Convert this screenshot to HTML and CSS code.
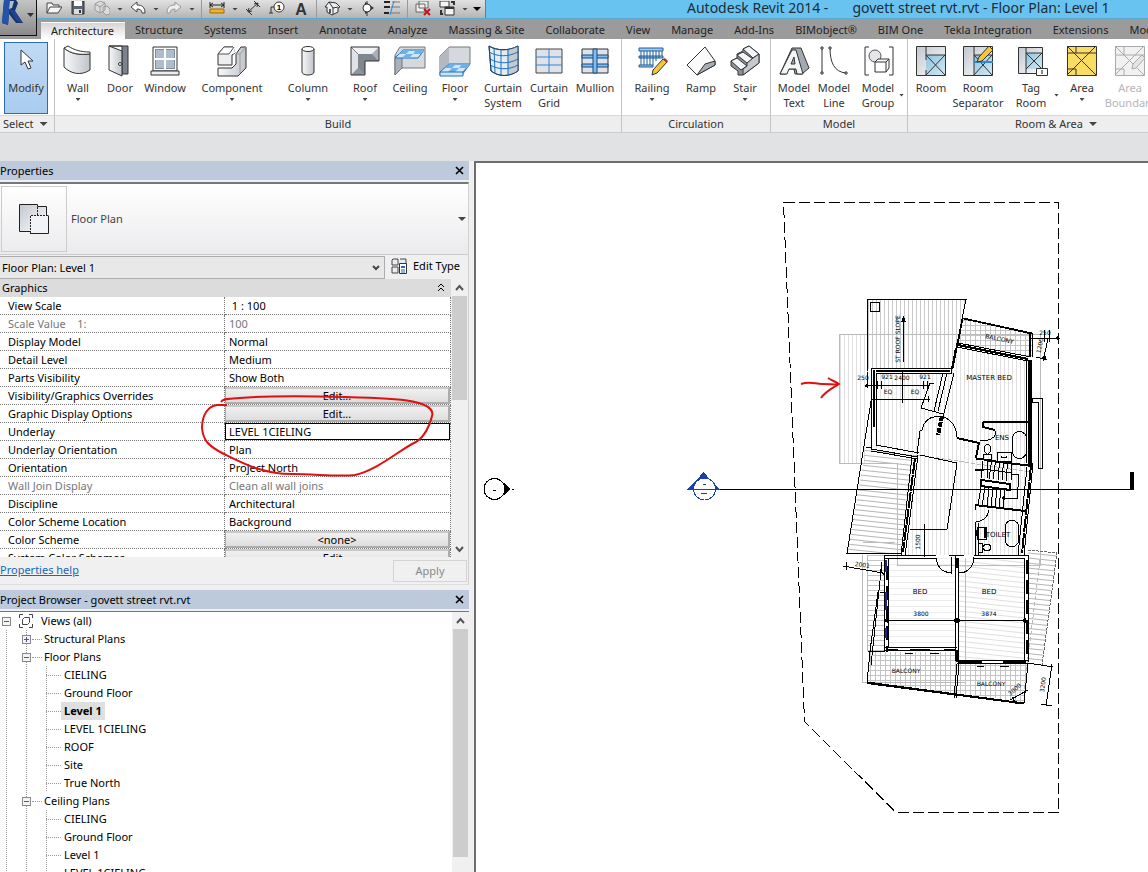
FILE: index.html
```html
<!DOCTYPE html>
<html lang="en">
	<head>
		<meta charset="UTF-8">
		<meta name="viewport" content="width=device-width, initial-scale=1.0">
		<title>Autodesk Revit 2014 - govett street rvt.rvt - Floor Plan: Level 1</title>
		<link rel="stylesheet" href="styles.css">
	</head>
	<body>
		<header class="titlebar">
			<button class="appmenu" aria-label="Application menu">
				<svg width="36" height="35" viewBox="0 0 36 35">
					<defs>
						<linearGradient id="metal" x1="0" y1="0" x2="1" y2="1"><stop offset="0" stop-color="#c3c8cf"/><stop offset="1" stop-color="#fbfcfd"/></linearGradient>
						<linearGradient id="shade" x1="0" y1="0" x2="1" y2="0"><stop offset="0" stop-color="#f8f9fa"/><stop offset="1" stop-color="#bfc4ca"/></linearGradient>
						<linearGradient id="glass" x1="0" y1="0" x2="1" y2="1"><stop offset="0" stop-color="#8fc4e0"/><stop offset="1" stop-color="#d3e8f2"/></linearGradient>
					</defs>
					<path d="M4 0L16 0L18 3L15 11L23 23L16 23L9 14L8 25L2 23Z" fill="#16356f"/>
					<path d="M4 0L10 0L9 14L8 25L2 23Z" fill="#2453a6"/>
					<path d="M10 1L14 1L12 8L9 9Z" fill="#b5bccb"/>
					<path d="M9 9L15 11L23 23L17 21Z" fill="#1f4590"/>
					<path d="M27 13h7l-3.500 4z" fill="#333"/>
				</svg>
			</button>
			<nav class="quick" aria-label="Quick access">
				<button aria-label="Open"><svg viewBox="0 0 16 16"><path d="M1 12V2h5l1 2h6v2M1 12l3-6h12l-4 6z" fill="#f5f5f5" stroke="#444"/></svg></button>
				<button aria-label="Save"><svg viewBox="0 0 16 16"><path d="M2 0h12v13H2z" fill="#5b6470" stroke="#333"/><path d="M4 0h8v5H4z" fill="#fff"/><path d="M4 8h8v5H4z" fill="#ddd"/><path d="M9 9h2v3H9z" fill="#333"/></svg></button>
				<button aria-label="Synchronize"><svg viewBox="0 0 16 16"><path d="M1 3l5-3 5 2v7l-5 3-5-3zM1 3l5 3 5-4M6 6v6M9 6l4-1 3 3v5l-4 1-3-3z" fill="#ddd" stroke="#999"/></svg></button>
				<i class="caret"></i>
				<button aria-label="Undo"><svg viewBox="0 0 16 16"><path d="M1 6l6-5v3c5 0 8 2 8 8h-3c0-3-2-4-5-4v3z" fill="#fff" stroke="#444"/></svg></button>
				<i class="caret"></i>
				<button aria-label="Redo"><svg viewBox="0 0 16 16"><path d="M15 6L9 1v3c-5 0-8 2-8 8h3c0-3 2-4 5-4v3z" fill="#eee" stroke="#999"/></svg></button>
				<i class="caret"></i>
				<i class="split"></i>
				<button aria-label="Measure"><svg viewBox="0 0 16 16"><path d="M1 4h14M1 1v6M15 1v6M4 2L1 4l3 2M12 2l3 2-3 2" fill="none" stroke="#222"/><path d="M1 8h14v4H1z" fill="#f0b429" stroke="#a36b00"/></svg></button>
				<i class="caret"></i>
				<button aria-label="Aligned dimension"><svg viewBox="0 0 16 16"><path d="M3 11L13 2M1 8l6 6M9 0l6 6M3 11l1-4M3 11l4-1M13 2l-4 1M13 2l-1 4" fill="none" stroke="#333"/></svg></button>
				<button aria-label="Tag by category"><svg viewBox="0 0 16 16"><circle cx="10" cy="6" r="5" fill="#fff" stroke="#333"/><path d="M5 6H2v6M0 12h4" fill="none" stroke="#333"/><text x="10" y="9" class="tagnum">1</text></svg></button>
				<button aria-label="Text"><svg viewBox="0 0 16 16"><text x="8" y="14" class="bigA">A</text></svg></button>
				<i class="split"></i>
				<button aria-label="Default 3D view"><svg viewBox="0 0 16 16"><path d="M1 6l4-5 7 1 4 4-2 1v4l-6 3-5-3V6z" fill="#eef1f4" stroke="#333"/><path d="M5 1l4 6v6M9 7l5-1" fill="none" stroke="#333"/><path d="M5 8h2v4H5z" fill="#555"/></svg></button>
				<i class="caret"></i>
				<button aria-label="Section"><svg viewBox="0 0 16 16"><path d="M5 1l9 6-9 6z" fill="#333"/><circle cx="7" cy="7" r="4" fill="#fff" stroke="#333"/><path d="M7 0v3M7 11v4" stroke="#333"/></svg></button>
				<button aria-label="Thin lines"><svg viewBox="0 0 16 16"><path d="M0 1h6M0 6h6M0 12h5" stroke="#222" stroke-width="2"/><path d="M8 1h8M7 6h9M6 12h10" stroke="#777"/><path d="M10 0L6 14" stroke="#2c8ad8"/></svg></button>
				<i class="split"></i>
				<button aria-label="Close hidden windows"><svg viewBox="0 0 16 16"><path d="M4 0h9v7H4zM1 3h9v8H1z" fill="#eee" stroke="#666"/><path d="M9 8l6 6M15 8l-6 6" stroke="#c4141c" stroke-width="2"/></svg></button>
				<button aria-label="Switch windows"><svg viewBox="0 0 16 16"><path d="M1 0h9v6H1zM6 6h9v8H6z" fill="#f4f4f4" stroke="#333"/><path d="M6 7h9M12 1h3v3M4 13H2v-4" fill="none" stroke="#333" stroke-width="2"/></svg></button>
				<i class="caret"></i>
				<i class="caret caret-big"></i>
			</nav>
			<h1 class="title"><span>Autodesk Revit 2014 -</span><span>govett street rvt.rvt - Floor Plan: Level 1</span></h1>
		</header>

		<nav class="tabs">
			<a href="#" class="active">Architecture</a>
			<a href="#">Structure</a>
			<a href="#">Systems</a>
			<a href="#">Insert</a>
			<a href="#">Annotate</a>
			<a href="#">Analyze</a>
			<a href="#">Massing &amp; Site</a>
			<a href="#">Collaborate</a>
			<a href="#">View</a>
			<a href="#">Manage</a>
			<a href="#">Add-Ins</a>
			<a href="#">BIMobject®</a>
			<a href="#">BIM One</a>
			<a href="#">Tekla Integration</a>
			<a href="#">Extensions</a>
			<a href="#">Modify</a>
		</nav>

		<div class="ribbon">
			<section class="group select">
				<div class="tools">
					<button class="tool w44 selected">
						<svg viewBox="0 0 32 32"><path d="M11 5v15l4-3 3 7 3-1-3-7h5z" fill="#fff" stroke="#333"/></svg>
						<span>Modify</span>
					</button>
				</div>
				<h2>Select <i class="caret caret-big"></i></h2>
			</section>

			<section class="group">
				<div class="tools">
					<button class="tool w40">
						<svg viewBox="0 0 32 32"><path d="M2 3c7 6 15 7 26 6v16c-9 6-19 4-26-3z" fill="url(#shade)" stroke="#333"/><path d="M2 3l4-2c6 4 13 6 22 6v2C17 10 9 9 2 3z" fill="#fff" stroke="#333"/></svg>
						<span>Wall</span><i class="caret"></i>
					</button>
					<button class="tool w44">
						<svg viewBox="0 0 32 32"><path d="M5 1h19v28h-6V1z" fill="#7b838e" stroke="#333"/><path d="M5 1l13 5v25L5 25z" fill="url(#shade)" stroke="#333"/><circle cx="16" cy="19" r="1.500" fill="#fff" stroke="#333"/></svg>
						<span>Door</span>
					</button>
					<button class="tool w46">
						<svg viewBox="0 0 32 32"><path d="M4 2h24v24H4z" fill="#fff" stroke="#333"/><path d="M6 4h20v20H6z" fill="#7f8da0"/><path d="M7 5h8v8H7zM17 5h8v8h-8zM7 15h8v8H7zM17 15h8v8h-8z" fill="#aebccd"/><path d="M15 4h2v20h-2zM6 13h20v2H6z" fill="#fff"/><path d="M2 26h28v4H2z" fill="#eee" stroke="#333"/></svg>
						<span>Window</span>
					</button>
					<button class="tool w88">
						<svg viewBox="0 0 32 32"><path d="M2 9l6-7h9l2 6-3 2v10H2z" fill="#eceef0" stroke="#333"/><path d="M2 9h14l3-1-1-6H8z" fill="#fff"/><path d="M2 9l6-7h9M2 9h11l5-7" fill="none" stroke="#555"/><path d="M20 9l5-7h5v21l-8 8H2v-8h14l4-4z" fill="url(#shade)" stroke="#333"/><path d="M20 9h4l6-7M24 9v19" fill="none" stroke="#999"/></svg>
						<span>Component</span><i class="caret"></i>
					</button>
					<button class="tool w64">
						<svg viewBox="0 0 32 32"><path d="M10 4v23c0 4 12 4 12 0V4z" fill="url(#shade)" stroke="#333"/><ellipse cx="16" cy="4" rx="6" ry="2.500" fill="#fff" stroke="#333"/></svg>
						<span>Column</span><i class="caret"></i>
					</button>
					<button class="tool w50">
						<svg viewBox="0 0 32 32"><path d="M2 2h28v14H16v14H2z" fill="#c9cdd3"/><path d="M2 2l7 7h14l7-7z" fill="#f2f3f5"/><path d="M2 2l7 7v14l-7 7z" fill="#dfe2e6"/><path d="M9 23l7 7H2z" fill="#8d949e"/><path d="M23 9l7 7V2z" fill="#a9afb8"/><path d="M9 9h14l7 7H16v14l-7-7z" fill="#7f8791"/><path d="M2 2l7 7" stroke="#888"/><path d="M2 2h28v14H16v14H2z" fill="none" stroke="#333"/></svg>
						<span>Roof</span><i class="caret"></i>
					</button>
					<button class="tool w40">
						<svg viewBox="0 0 32 32"><path d="M1 10l5-8h25v21H8l-7 7z" fill="#d5d8dc" stroke="#777"/><path d="M8 8v15l-7 7V12z" fill="#aab0b7" stroke="#777"/><path d="M1 13l8-8h21l-6 8z" fill="#cfe6f8" stroke="#1a70bd"/><path d="M9 5h7l-4 4H5zM22 5h8l-3 4h-8zM12 9h7l-4 4H8z" fill="#6fb1e4"/></svg>
						<span>Ceiling</span>
					</button>
					<button class="tool w50">
						<svg viewBox="0 0 32 32"><path d="M1 11l9-9h21v17l-8 11H1z" fill="#d5d8dc" stroke="#777"/><path d="M1 11l9-9v17l-9 8z" fill="#b4b9c0"/><path d="M1 27l9-8h21l-7 8v4H1z" fill="#cfe6f8" stroke="#1a70bd"/><path d="M10 19h7l-4 4H6zM23 19h8l-3 4h-8zM13 23h7l-4 4H9z" fill="#6fb1e4"/><path d="M1 27h23" stroke="#1a70bd"/></svg>
						<span>Floor</span><i class="caret"></i>
					</button>
					<button class="tool w46">
						<svg viewBox="0 0 32 32"><path d="M2 1c8 5 20 5 29 0v25c-9 6-19 6-27 0z" fill="#e3edf6" stroke="#333"/><path d="M20 5L31 1v25l-10 4z" fill="#c3cad2"/><path d="M7 3l1 25M14 5v25M21 5v25M2 7c9 5 19 5 29 0M3 14c9 5 19 5 28 0M3 20c9 5 19 5 28 0" fill="none" stroke="#1a70bd"/><path d="M2 1c8 5 20 5 29 0v25c-9 6-19 6-27 0z" fill="none" stroke="#174a82"/></svg>
						<span>Curtain System</span>
					</button>
					<button class="tool w46">
						<svg viewBox="0 0 32 32"><path d="M3 4h26v24H3z" fill="#dfe2e6" stroke="#444"/><path d="M16 4v24M3 12h26M3 20h26" stroke="#2c8ad8"/></svg>
						<span>Curtain Grid</span>
					</button>
					<button class="tool w46">
						<svg viewBox="0 0 32 32"><path d="M3 4h26v24H3z" fill="#dfe2e6" stroke="#333"/><path d="M3 10h26v3H3zM3 19h26v3H3z" fill="#7fbdf0" stroke="#174a82"/><path d="M14 4h4v24h-4z" fill="#7fbdf0" stroke="#174a82"/></svg>
						<span>Mullion</span>
					</button>
				</div>
				<h2>Build</h2>
			</section>

			<section class="group">
				<div class="tools">
					<button class="tool w54">
						<svg viewBox="0 0 32 32"><path d="M3 3h24v3H3zM3 11h24v2H3zM3 20h14v2H3z" fill="#9cc9ef" stroke="#1d5c9c"/><path d="M5 6v14M8 6v14M11 6v14M14 6v14M17 6v14M20 6v10M23 6v7M26 6v5" stroke="#1d5c9c"/><path d="M16 30l1-5L27 14l4 3-10 11z" fill="#f5c53c" stroke="#333"/><path d="M27 14l2-1 3 3-1 2z" fill="#a63d2f"/></svg>
						<span>Railing</span><i class="caret"></i>
					</button>
					<button class="tool w44">
						<svg viewBox="0 0 32 32"><path d="M2 20L20 2l10 14v4L12 30z" fill="#fafafa" stroke="#333"/><path d="M12 30l8-11 10-3v4z" fill="#a9aeb5" stroke="#333"/></svg>
						<span>Ramp</span>
					</button>
					<button class="tool w44">
						<svg viewBox="0 0 32 32"><path d="M2 16l6-3V9l6-3V4l6-3 10 8v9L14 30H9V26L2 21z" fill="#8d949c" stroke="#333"/><path d="M14 4l6-3 10 8-6 4zM8 10l6-3 10 7-6 4zM2 16l6-3 10 8-6 4z" fill="#f4f5f6" stroke="#333"/><path d="M30 9v9L14 30v-6l4-3v-3l6-5z" fill="#c5c9ce" stroke="#333"/></svg>
						<span>Stair</span><i class="caret"></i>
					</button>
				</div>
				<h2>Circulation</h2>
			</section>

			<section class="group">
				<div class="tools">
					<button class="tool w40">
						<svg viewBox="0 0 32 32"><path d="M2 29L14 3h9l8 20-7 6h-7l-1-5h-6l-2 5z" fill="#a3a9b1" stroke="#333"/><path d="M2 29L14 5h4l7 24h-6l-1-5h-7l-2 5zM13 19h4l-1-7z" fill="#f4f5f6" fill-rule="evenodd" stroke="#333"/></svg>
						<span>Model Text</span>
					</button>
					<button class="tool w40">
						<svg viewBox="0 0 32 32"><path d="M4 3v25M12 3c0 14 4 24 16 25" fill="none" stroke="#333"/><path d="M3 2h2v2H3zM3 27h2v2H3zM11 2h2v2h-2zM27 27h2v2h-2z" fill="#fff" stroke="#333"/></svg>
						<span>Model Line</span>
					</button>
					<button class="tool w50">
						<svg viewBox="0 0 32 32"><path d="M6 2H2v28h4M26 2h4v28h-4" fill="none" stroke="#333"/><circle cx="12" cy="11" r="6" fill="#e3e5e8" stroke="#555"/><path d="M12 17l3-3h11v9l-3 4H12z" fill="#fff" stroke="#333"/><path d="M12 17h11v10M23 17l3-3" fill="none" stroke="#333"/></svg>
						<span class="side">Model Group<i class="caret"></i></span>
					</button>
				</div>
				<h2>Model</h2>
			</section>

			<section class="group">
				<div class="tools">
					<button class="tool w40">
						<svg viewBox="0 0 32 32"><path d="M1.500 1.500h29v29h-29z" fill="url(#metal)" stroke="#333"/><path d="M11 10h19v20H11z" fill="url(#glass)"/><path d="M11 1v14M11 25v5M11 10h19M11 10l19 20M30 10L11 30" fill="none" stroke="#333"/></svg>
						<span>Room</span>
					</button>
					<button class="tool w54">
						<svg viewBox="0 0 32 32"><path d="M1.500 1.500h29v29h-29z" fill="url(#metal)" stroke="#333"/><path d="M12 10h18v20H12z" fill="url(#glass)"/><path d="M12 1v29M12 10h18M12 10l18 20M30 10L12 30" fill="none" stroke="#333"/><path d="M12 17h19" stroke="#2c8ad8" stroke-width="2"/><path d="M15 17l2-5L27 1l4 4-11 11z" fill="#f5c53c" stroke="#333"/></svg>
						<span>Room Separator</span>
					</button>
					<button class="tool w54">
						<svg viewBox="0 0 32 32"><path d="M2.500 2.500h24v26h-24z" fill="url(#metal)" stroke="#333"/><path d="M10 8h16v16H10z" fill="url(#glass)"/><path d="M10 2v26M10 8h16M10 8l16 16M26 8L10 24" fill="none" stroke="#333"/><path d="M20.500 23.500h11v7h-11z" fill="#fff" stroke="#333"/><path d="M26 25v4" stroke="#111"/></svg>
						<span class="side">Tag Room<i class="caret"></i></span>
					</button>
					<button class="tool w46">
						<svg viewBox="0 0 32 32"><path d="M1.500 1.500h29v29h-29z" fill="#fbdc62" stroke="#333"/><path d="M1 8h29M10 1v7M10 24v6M1 1l29 29M30 1L1 30M1 24h9" fill="none" stroke="#333"/></svg>
						<span>Area</span><i class="caret"></i>
					</button>
					<button class="tool w50" disabled>
						<svg viewBox="0 0 32 32"><path d="M1.500 1.500h29v29h-29z" fill="#f1f1f1" stroke="#aaa"/><path d="M1 10h29M10 1v9M10 24v6M1 1l29 29M30 1L1 30M1 24h9" fill="none" stroke="#aaa"/><path d="M18 24l1-5 9-9 3 3-9 10z" fill="#e5e5e5" stroke="#aaa"/></svg>
						<span>Area Boundary</span>
					</button>
				</div>
				<h2 class="roomarea">Room &amp; Area <i class="caret caret-big"></i></h2>
			</section>
		</div>
		<div class="optionsbar"></div>

		<main class="workspace">
			<aside class="dock">
				<section class="palette">
					<header class="caption"><h2>Properties</h2><button aria-label="Close"><svg width="9" height="9" viewBox="0 0 9 9"><path d="M1 1l7 7M8 1l-7 7" stroke="#000" stroke-width="1.600"/></svg></button></header>
					<div class="props">
						<button class="type">
							<span class="thumb">
								<svg width="32" height="32" viewBox="0 0 32 32"><path d="M1.500 1.500h18v2h9v9h-9v16h-18z" fill="url(#metal)"/><path d="M12.500 12.500h18v18h-18z" fill="#f1f4f6"/><path d="M12 28.500H1.500v-27h18v2h9v9M12 30.500h18.500v-18" fill="none" stroke="#222"/><path d="M19.500 4v8.500M30 12.500H12.500V30" fill="none" stroke="#222" stroke-dasharray="2 1"/></svg>
							</span>
							<span class="typename">Floor Plan</span>
							<i class="caret caret-big"></i>
						</button>
						<div class="instance">
							<select aria-label="Instance"><option>Floor Plan: Level 1</option></select>
							<button class="edittype">
								<svg width="16" height="16" viewBox="0 0 16 16"><path d="M1 2l1-1h5v6H1zM9 1h6v6H9M1 9h6v6H1z" fill="#e9edf1" stroke="#444"/><path d="M8.500 5.500h7v10h-7z" fill="#fff" stroke="#333"/><path d="M10 8h4v2h-4z" fill="#2467b3"/><path d="M10 12h4M10 14h4" stroke="#2467b3"/></svg>
								Edit Type
							</button>
						</div>
						<div class="listing">
							<div class="listview">
								<table>
									<colgroup><col class="names"><col></colgroup>
									<thead><tr><th colspan="2">Graphics<svg width="8" height="9" viewBox="0 0 8 9"><path d="M1 4l3-3 3 3M1 8l3-3 3 3" fill="none" stroke="#000"/></svg></th></tr></thead>
									<tbody>
										<tr><td>View Scale</td><td>&nbsp;1 : 100</td></tr>
										<tr class="dim"><td>Scale Value &nbsp;&nbsp; 1:</td><td>100</td></tr>
										<tr><td>Display Model</td><td>Normal</td></tr>
										<tr><td>Detail Level</td><td>Medium</td></tr>
										<tr><td>Parts Visibility</td><td>Show Both</td></tr>
										<tr><td>Visibility/Graphics Overrides</td><td class="cell"><button>Edit...</button></td></tr>
										<tr><td>Graphic Display Options</td><td class="cell"><button>Edit...</button></td></tr>
										<tr><td><label for="underlay">Underlay</label></td><td class="cell"><input id="underlay" value="LEVEL 1CIELING"></td></tr>
										<tr><td>Underlay Orientation</td><td>Plan</td></tr>
										<tr><td>Orientation</td><td>Project North</td></tr>
										<tr class="dim"><td>Wall Join Display</td><td>Clean all wall joins</td></tr>
										<tr><td>Discipline</td><td>Architectural</td></tr>
										<tr><td>Color Scheme Location</td><td>Background</td></tr>
										<tr><td>Color Scheme</td><td class="cell"><button>&lt;none&gt;</button></td></tr>
										<tr><td>System Color Schemes</td><td class="cell"><button>Edit...</button></td></tr>
									</tbody>
								</table>
							</div>
							<div class="scrollbar">
								<svg width="15" height="17" viewBox="0 0 15 17"><path d="M4 11l3.500-4 3.500 4" fill="none" stroke="#555" stroke-width="2"/></svg>
								<i class="handle"></i>
								<svg width="15" height="17" viewBox="0 0 15 17"><path d="M4 7l3.500 4L11 7" fill="none" stroke="#555" stroke-width="2"/></svg>
							</div>
						</div>
						<footer class="applybar"><a href="#">Properties help</a><button disabled>Apply</button></footer>
					</div>
					<svg class="markup" width="240" height="92" viewBox="198 390 240 92"><path d="M221 402C223 398 230 399 240 398C275 395 310 396 345 397C375 398 400 398 415 402C428 405 434 410 432 416C430 426 424 437 416 442C402 448 378 470 355 475C340 477 315 474 292 474C262 474 240 462 224 454C208 446 203 440 202 428C202 415 208 406 217 405L227 405" fill="none" stroke="#e01010" stroke-width="2"/></svg>
				</section>

				<section class="palette browser">
					<header class="caption"><h2>Project Browser - govett street rvt.rvt</h2><button aria-label="Close"><svg width="9" height="9" viewBox="0 0 9 9"><path d="M1 1l7 7M8 1l-7 7" stroke="#000" stroke-width="1.600"/></svg></button></header>
					<div class="treebox">
						<div class="tree">
							<div class="node root"><button class="fold" aria-label="Collapse"></button>
								<svg width="14" height="14" viewBox="0 0 14 14"><path d="M4 .5H.5V4M10 .5h3.500V4M4 13.500H.5V10M10 13.500h3.500V10" fill="none" stroke="#444"/><path d="M3.500 5.500l2-2h5v5l-2 2h-5z" fill="#fff" stroke="#444"/></svg>
								Views (all)</div>
							<ul class="branches">
								<li><div class="node"><button class="fold plus" aria-label="Expand"></button>Structural Plans</div></li>
								<li><div class="node"><button class="fold" aria-label="Collapse"></button>Floor Plans</div>
									<ul class="leaves">
										<li>CIELING</li>
										<li>Ground Floor</li>
										<li><b>Level 1</b></li>
										<li>LEVEL 1CIELING</li>
										<li>ROOF</li>
										<li>Site</li>
										<li>True North</li>
									</ul>
								</li>
								<li><div class="node"><button class="fold" aria-label="Collapse"></button>Ceiling Plans</div>
									<ul class="leaves">
										<li>CIELING</li>
										<li>Ground Floor</li>
										<li>Level 1</li>
										<li>LEVEL 1CIELING</li>
										<li>ROOF</li>
									</ul>
								</li>
							</ul>
						</div>
						<div class="scrollbar">
							<svg width="15" height="17" viewBox="0 0 15 17"><path d="M4 11l3.500-4 3.500 4" fill="none" stroke="#555" stroke-width="2"/></svg>
							<i class="handle"></i>
						</div>
					</div>
				</section>
			</aside>

			<div class="canvas">
				<svg class="plan" width="672" height="709" viewBox="476 163 672 709">
					<defs>
						<pattern id="vert" width="4" height="8" patternUnits="userSpaceOnUse"><path d="M.5 0v8" stroke="#c9c9c9"/></pattern>
						<pattern id="vertlight" width="4" height="8" patternUnits="userSpaceOnUse"><path d="M.5 0v8" stroke="#e0e0e0"/></pattern>
						<pattern id="tile" width="5" height="5" patternUnits="userSpaceOnUse"><path d="M.5 0v5M0 .5h5" stroke="#c4c4c4"/></pattern>
						<pattern id="boards" width="8" height="5" patternUnits="userSpaceOnUse"><path d="M0 .5h8" stroke="#c4c4c4"/></pattern>
						<pattern id="boardslant" width="8" height="5" patternUnits="userSpaceOnUse" patternTransform="rotate(6)"><path d="M0 2.500h8" stroke="#b4b4b4" class="soft"/></pattern>
						<pattern id="bedlines" width="8" height="5" patternUnits="userSpaceOnUse" patternTransform="rotate(6)"><path d="M0 2.500h8" stroke="#e0e0e0" class="soft"/></pattern>
						<pattern id="bedflat" width="8" height="6" patternUnits="userSpaceOnUse"><path d="M0 .5h8" stroke="#ececec"/></pattern>
					</defs>

					<!-- site boundary -->
					<path d="M783.500 202.500H1058.500V812.500H896L804.500 721.500Z" class="site"/>

					<!-- hatches -->
					<path d="M867 299H966L952 369H867Z" fill="url(#vert)"/>
					<path d="M963 318L1032 333V357L958 343Z" fill="url(#tile)"/>
					<path d="M839 335H867V463H839ZM876 373H950L958 346L1028 360V463L1022 555H905L918 455L876 448Z" fill="url(#vertlight)"/>
					<path d="M866 447L918 455L903 553H847Z" fill="url(#boardslant)"/>
					<path d="M867 555H885V651H867Z" fill="url(#boards)"/>
					<path d="M1028 550L1057 553L1042 665L1028 663Z" fill="url(#boardslant)"/>
					<path d="M888 558H955V648H888Z" fill="url(#bedflat)"/>
					<path d="M958 558H1024V660H958Z" fill="url(#bedlines)"/>
					<path d="M870 652H956V663H1028L1024 702L867 682Z" fill="url(#tile)"/>

					<!-- underlay outlines -->
					<g class="under">
						<path d="M897 463.500H839.500V334.500H1041M1040.500 334V565.500H897.500V463"/>
						<path d="M862.500 555V682.500H965M862.500 542.500H895M965.500 558V660M867.500 555V651"/>
						<path d="M918 455L1030 472M1040 560L1024 690" stroke-dasharray="4 2"/>
					</g>

					<!-- section line and heads -->
					<path d="M717 489.500H1130" class="line"/>
					<path d="M1129.500 472h4v18h-4z"/>
					<circle cx="494.500" cy="489" r="10.500" class="line"/>
					<path d="M504 483L510 489L504 495ZM493 489.500h3v1h-3zM512 489h2v1h-2z"/>
					<g class="elev">
						<path d="M688 489.500L703.500 473L719 489.500Z"/>
						<circle cx="704.500" cy="489" r="11"/>
						<path d="M690 489.500H718M703 484.500h3M701 493.500h6"/>
					</g>

					<!-- upper roof and balcony -->
					<g class="line">
						<path d="M867.500 371V299.500H966L952 369M870.500 302.500H879.500V311.500H870.500Z"/>
						<path d="M903.500 362V318M867 372V385.500H929M872 399.500H930M902.500 372V403M877 381v8M881 381v8M923 381v8M927 381v8M874 396v6M928 396v6"/>
						<path d="M943 373L934 411M947 373L938 411M930 383L921 408L943 414M954 373L943 417M930 383H934"/>
						<path d="M1030 338.500H1060M1048 339L1043 361M1036 357L1047 360M1044 330V342M1049 330V342M1032.500 398.500H1042.500V468H1038.500V402.500H1032.500Z"/>
						<path d="M872 395L847 553.500H902M871 448L866 447"/>
					</g>
					<path d="M901 322L903.500 316L906 322ZM864 386l4-4v6zM1055 338l4-3v6zM1041 358l4-3 2 5z"/>
					<g class="wall">
						<path d="M963 318L1032 333V357M964 319L1032 334"/>
						<path d="M871.500 450V368.500H953L963 318M876.500 446V373.500H951L955 350"/>
						<path d="M958 343L1031 357M957 347L1028 361M1026.500 361V463"/>
						<path d="M871 449L918 457M871 451L918 459M876 445L919 453"/>
					</g>
					<g class="heavy">
						<path d="M874 370V427M1030 333V357M960 332L952 368M876 371H950M958 345L1028 359M983 422H1029V428"/>
						<path d="M983 422V427L995 430M957 438L979 443L976 458M976 459H984" />
					</g>
					<path d="M1029.500 360V466" class="thick"/>
					<path d="M942 416L938 435" class="thick" stroke-dasharray="5 1"/>

					<!-- hall, ensuite, stair, toilet -->
					<g class="line">
						<path d="M917 454L920 431L922 430C925 414 945 412 953 424C956 429 957 434 957 437"/>
						<path d="M920 455L957 463L947 529.500H910M924.500 524V557M921 529h7M921 555h7"/>
						<path d="M996 431C996 436 992 441 980 441"/>
						<path d="M997 452H1011V461H997ZM1001 456a3 2 0 0 0 6 0M983 454H991V459H983Z"/>
						<ellipse cx="987.500" cy="449" rx="3" ry="5"/>
						<rect x="1012.500" y="431.500" width="14" height="27" rx="7"/>
						<path d="M983 461L981 478M987.500 461V478M991.500 462L989 479M995.500 462L993 479M999.500 463L998 480M1003.500 463L1002 480M1007.500 463L1006 481M1011.500 464V480M983 469L1012 473"/>
						<path d="M981 487L978 505M985 487L982 506M989 488L987 506M993 488L991 506M997 489L995 507M1001 489L999 508M1005 490L1003 509"/>
						<path d="M1012 474L1019 475L1017 499L1002 498M1005 496L1002 498L1005 500"/>
						<path d="M975.500 505V510M975.500 522V555M978.500 523V555M989 510C988 517 984 521 976 522"/>
						<path d="M977 527H986V539H977Z"/>
						<ellipse cx="987" cy="547.500" rx="4" ry="3"/>
						<path d="M978 543h4v9h-4z"/>
						<rect x="1005.500" y="520.500" width="13" height="26" rx="6"/>
					</g>
					<g class="wall">
						<path d="M1033 463L1024 555M1027 467L1018 555M918 455L905 556M912 456L901 555"/>
					</g>
					<g class="heavy">
						<path d="M984 460L1032 466M975 470h9M975 505L1025 511"/>
						<path d="M981 480L1010 484V490L981 486Z" fill="#fff"/>
						<path d="M915 458L903 552M1031 465L1022 553" stroke-dasharray="16 1"/>
						<path d="M977 530v6M985 528v10"/>
					</g>

					<!-- bedrooms and lower balconies -->
					<g class="wall">
						<path d="M885 555.500H936M949 555.500H964M974 555.500H1028M885 558.500H936M974 558.500H1024"/>
						<path d="M884.500 555V651M888.500 558V647M955.500 555V661M958.500 558V660M1024.500 558V662M1028 555V662"/>
						<path d="M885 647.500H957M885 650.500H956M957 660.500H1028M957 663H1029"/>
						<path d="M870 652L867 682L1024 703L1028 663M957 664L954 698M959 664L956 698"/>
					</g>
					<g class="heavy">
						<path d="M886.500 566V652M1026.500 560V660M956.500 558V568" stroke-dasharray="14 6"/>
						<path d="M886 649.500H898M910 649.500H930M944 649.500H956M958 662H982M1003 662H1026M867 683L1024 703.500M957 650V662"/>
					</g>
					<path d="M885.500 560v12M885.500 592v18M885.500 628v10" stroke="#22228c" stroke-width="2"/>
					<g class="line">
						<path d="M886 620.500H1026M936.500 558C937 567 942 572 951 573V557M974 557C974 566 968 573 959 573"/>
						<path d="M867.500 651.500H885M882 562L871 665M878 592L870 651M880 592h4"/>
						<path d="M1028 550L1057 553L1042 665" stroke-dasharray="3 1" class="pale"/>
						<path d="M843 566L883 573M846 562v8M880 569l4 6M1028 663L1053 667M1052 664L1046 706M1041 704L1052 706M1010 700L1028 690M1012 697l4 7"/>
						<path d="M905 653.500h8M930 653.500h9M977 666.500h7M1000 666.500h9"/>
					</g>
					<path d="M884 620.500l4-3v6zM953 620.500l4-3 4 3-4 3zM1022 620.500l4-3v6z"/>

					<g class="note">
						<text x="989" y="380">MASTER BED</text>
						<text x="1002" y="440">ENS</text>
						<text x="998" y="537">TOILET</text>
						<text x="920" y="594">BED</text>
						<text x="989" y="594">BED</text>
					</g>
					<g class="note small">
						<text x="906" y="673">BALCONY</text>
						<text x="991" y="686">BALCONY</text>
						<text transform="translate(999 341) rotate(12)">BALCONY</text>
						<text transform="translate(900 339) rotate(-90)">ST ROOF SLOPE</text>
						<text x="863" y="380">250</text>
						<text x="887" y="379">921</text>
						<text x="902" y="380">2400</text>
						<text x="925" y="379">921</text>
						<text x="888" y="394">EQ</text>
						<text x="915" y="394">EQ</text>
						<text x="1045" y="335">250</text>
						<text transform="translate(1042 346) rotate(-78)">1200</text>
						<text transform="translate(920 542) rotate(-90)">1500</text>
						<text x="921" y="616">3800</text>
						<text x="989" y="616">3874</text>
						<text transform="translate(862 567) rotate(8)">2001</text>
						<text transform="translate(1045 685) rotate(-82)">3200</text>
						<text transform="translate(1016 691) rotate(-42)">3000</text>
					</g>

					<path d="M801 384C810 381 815 384 822 384S832 384 838 385M828 378C831 380 836 382 839 384C833 388 826 391 821 398" class="arrow"/>
				</svg>
			</div>
		</main>
	</body>
</html>
```
FILE: styles.css
```css
* {
	box-sizing: border-box;
}

body {
	margin: 0;
	height: 100vh;
	display: flex;
	flex-direction: column;
	overflow: hidden;
	font-family: "Noto Sans", "Open Sans", sans-serif;
	font-size: 11px;
	line-height: 18px;
	color: #000;
	background: #f0f0f0;
}

button, select, input {
	font: inherit;
	color: inherit;
	margin: 0;
	padding: 0;
	border: 0;
	background: none;
}

h1, h2 {
	margin: 0;
	font-size: inherit;
	font-weight: normal;
}

ul {
	margin: 0;
	padding: 0;
	list-style: none;
}

.caret {
	flex: none;
	width: 5px;
	height: 3px;
	background: #444;
	clip-path: polygon(0 0, 100% 0, 50% 100%);
}

.caret-big {
	width: 8px;
	height: 4px;
}

/* title bar */
.titlebar {
	position: relative;
	flex: none;
	display: flex;
	height: 19px;
	padding-left: 37px;
	background: #68c3f1;
	border-bottom: 1px solid #5da9d0;
}

.appmenu {
	position: absolute; top: 0; left: 0;
	z-index: 1;
	width: 37px;
	height: 36px;
	background: linear-gradient(#c4c4c4, #8a8a8a);
	border-right: 1px solid #111;
	border-bottom: 1px solid #111;
}

.appmenu svg, .quick svg, .tool svg, .thumb svg {
	display: block;
}

.quick {
	flex: none;
	display: flex;
	align-items: center;
	gap: 8px;
	width: 449px;
	height: 18px;
	padding-left: 9px;
	background: linear-gradient(#e2e2e2, #b4b4b4);
	border-right: 1px solid #777;
}

.quick button, .quick svg {
	width: 16px;
	height: 16px;
}

.quick .caret {
	width: 6px;
	margin: 0 -1px;
}

.quick .split {
	width: 1px;
	height: 18px;
	margin: 0 -1px;
	background: #999;
}

.quick .caret-big {
	width: 8px;
	background: #000;
	margin-left: -2px;
}

.tagnum {
	font: bold 8px "Liberation Sans", sans-serif;
	text-anchor: middle;
}

.bigA {
	font: bold 16px "Liberation Sans", sans-serif;
	text-anchor: middle;
	fill: #333;
}

.title {
	display: flex;
	gap: 24px;
	padding-left: 201px;
	font-size: 14px;
	line-height: 16px;
	color: #1b2c38;
	white-space: pre;
}

/* ribbon */
.tabs {
	flex: none;
	display: flex;
	height: 20px;
	padding: 3px 0 0 41px;
	background: #9b9b9b;
	overflow: hidden;
}

.tabs a {
	flex: none;
	padding: 0 11px 0 10px;
	line-height: 16px;
	color: #222;
	text-decoration: none;
	white-space: nowrap;
}

.tabs .active {
	background: linear-gradient(#d5d5d5, #fff);
	border-top: 1px solid #fff;
}

.ribbon {
	flex: none;
	display: flex;
	background: #fff;
	overflow: hidden;
}

.group {
	flex: none;
	border-right: 1px solid #c4c4c4;
}

.group h2 {
	display: flex;
	align-items: center;
	justify-content: center;
	gap: 6px;
	height: 18px;
	border-top: 1px solid #d8d8d8;
	border-bottom: 1px solid #ccc;
	background: #eee;
	color: #333;
}

.tools {
	display: flex;
	height: 76px;
	padding: 3px 3px 1px;
}

.select .tools {
	padding: 3px 6px 1px 4px;
}

.group.select h2 {
	justify-content: flex-start;
	padding-left: 3px;
}

.tool {
	flex: none;
	display: flex;
	flex-direction: column;
	align-items: center;
	padding-top: 3px;
	line-height: 15px;
	color: #333;
}

.tool svg {
	width: 32px;
	height: 32px;
	margin-bottom: 3px;
}

.tool .side {
	display: flex;
	align-items: center;
	gap: 1px;
	padding-left: 4px;
}

.tool > .caret {
	margin-top: 3px;
}

.tool:disabled {
	color: #b5b5b5;
}

.selected {
	padding-top: 2px;
	background: linear-gradient(#c0daf4, #a9ccef);
	border: 1px solid #2a6cb8;
}

.w40 { width: 40px; }
.w44 { width: 44px; }
.w46 { width: 46px; }
.w50 { width: 50px; }
.w54 { width: 54px; }
.w64 { width: 64px; }
.w88 { width: 88px; }

.group .roomarea {
	padding-left: 46px;
}

.optionsbar {
	flex: none;
	height: 28px;
	background: #e1e2e4;
}

/* docked palettes */
.workspace {
	flex: 1;
	display: flex;
	min-height: 0;
}

.dock {
	flex: none;
	display: flex;
	flex-direction: column;
	gap: 5px;
	width: 474px;
	padding-right: 5px;
}

.palette {
	position: relative;
	flex: none;
}

.caption {
	display: flex;
	justify-content: space-between;
	align-items: center;
	height: 19px;
	padding-right: 5px;
	background: #bccadb;
}

.caption svg {
	display: block;
}

.props {
	margin-top: 2px;
	border-top: 2px solid #74777c;
	border-right: 1px solid #d0d0d0;
	border-bottom: 1px solid #ddd;
}

.type {
	display: flex;
	align-items: center;
	width: 100%;
	height: 71px;
	padding: 1px 2px 1px 1px;
	text-align: left;
	background: linear-gradient(#fff, #ebebed);
	border-bottom: 1px solid #ccc;
}

.thumb {
	padding: 16px;
	border: 1px solid #ccc;
}

.typename {
	flex: 1;
	padding-left: 4px;
	color: #444;
}

.instance {
	display: flex;
	gap: 6px;
	padding-top: 1px;
}

.instance select {
	appearance: none;
	width: 385px;
	height: 23px;
	padding-left: 2px;
	border: 1px solid #adadad;
	border-left: 0;
	background: #e8e8e8 url("data:image/svg+xml,%3Csvg xmlns='http://www.w3.org/2000/svg' width='8' height='6'%3E%3Cpath d='M1 1l3 3 3-3' fill='none' stroke='%23444' stroke-width='2'/%3E%3C/svg%3E") no-repeat right 4px center;
}

.edittype {
	display: flex;
	align-items: center;
	gap: 6px;
	height: 20px;
}

.listing {
	display: flex;
	height: 278px;
}

.listview {
	flex: 1;
	overflow: hidden;
}

table {
	width: 100%;
	table-layout: fixed;
	border-collapse: separate;
	border-spacing: 0;
	background: #fff;
}

.names {
	width: 225px;
}

th {
	height: 18px;
	padding: 0 6px 0 2px;
	font-weight: normal;
	line-height: 18px;
	text-align: left;
	background: #dcdcdc;
}

th svg {
	float: right;
	margin-top: 4px;
}

td {
	height: 18px;
	padding: 0 0 0 8px;
	line-height: 17px;
	border-bottom: 1px dotted #777;
	border-right: 1px dotted #777;
}

td + td {
	padding-left: 4px;
}

td.cell {
	padding: 0;
}

.cell button {
	display: block;
	width: 100%;
	height: 17px;
	line-height: 13px;
	background: linear-gradient(#f0f0f0, #dedede);
	border: 2px solid #acacac;
	border-left-width: 1px;
	border-top-color: #c8c8c8;
}

.cell input {
	display: block;
	width: 100%;
	height: 17px;
	padding: 0 3px;
	border: 1px solid #000;
	background: #fff;
}

.dim {
	color: #777;
}

.scrollbar {
	display: flex;
	flex-direction: column;
	width: 17px;
	padding: 0 1px;
}

.handle {
	height: 104px;
	background: #cdcdcd;
}

.scrollbar svg:last-child {
	margin-top: auto;
}

.applybar {
	display: flex;
	justify-content: space-between;
	padding: 3px 1px 2px 0;
}

.applybar a {
	line-height: 20px;
	color: #1a66b8;
}

.applybar button {
	width: 74px;
	height: 22px;
	color: #888;
	border: 1px solid #d4d4d4;
}

.markup {
	position: absolute; top: 229px; left: 198px;
}

.browser {
	flex: 1;
	display: flex;
	flex-direction: column;
	min-height: 0;
}

.treebox {
	flex: 1;
	display: flex;
	min-height: 0;
	margin-top: 2px;
	border-top: 1px solid #74777c;
	background: #fff;
}

.treebox .scrollbar {
	background: #f0f0f0;
}

.treebox .handle {
	height: 228px;
}

.tree {
	flex: 1;
	overflow: hidden;
}

.branches, .leaves {
	background: repeating-linear-gradient(#999 0 1px, transparent 1px 2px) no-repeat;
	background-size: 1px 100%;
}

.branches {
	margin-left: 6px;
	padding-left: 16px;
}

.branches > li {
	background: repeating-linear-gradient(#999 0 1px, transparent 1px 2px) 4px 0 no-repeat;
	background-size: 1px 100%;
}

.leaves {
	margin-left: 24px;
}

.leaves li {
	display: flex;
	align-items: center;
	gap: 3px;
	height: 18px;
}

.leaves li::before {
	content: "";
	width: 15px;
	border-top: 1px dotted #999;
}

.leaves b {
	margin-left: -3px;
	padding: 0 3px;
	background: #dfdfdf;
}

.node {
	display: flex;
	align-items: center;
	height: 18px;
	white-space: nowrap;
}

.root {
	gap: 8px;
	padding-left: 2px;
}

.fold {
	width: 9px;
	height: 9px;
	border: 1px solid #888;
	background: linear-gradient(#445a90, #445a90) center / 5px 1px no-repeat, #f4f4f8;
}

.plus {
	background: linear-gradient(#445a90, #445a90) center / 5px 1px no-repeat, linear-gradient(#445a90, #445a90) center / 1px 5px no-repeat, #f4f4f8;
}

.branches .fold::after {
	content: "";
	display: block;
	width: 10px;
	margin-left: 9px;
	border-top: 1px dotted #999;
}

.branches .fold {
	margin-right: 13px;
}

/* drawing area */
.canvas {
	flex: 1;
	overflow: hidden;
	background: #fff;
	border-top: 2px solid #6e6e6e;
	border-left: 2px solid #6e6e6e;
}

.plan {
	display: block;
	shape-rendering: crispEdges;
}

.soft {
	shape-rendering: auto;
}

.site {
	fill: none;
	stroke: #000;
	stroke-dasharray: 11 4;
}

.line, .wall {
	fill: none;
	stroke: #000;
}

.line .pale {
	stroke: #666;
}

.heavy {
	fill: none;
	stroke: #000;
	stroke-width: 2;
}

.thick {
	fill: none;
	stroke: #000;
	stroke-width: 4;
}

.under {
	fill: none;
	stroke: #bbb;
}

.elev {
	fill: #1a3fb0;
	stroke: #1a3fb0;
}

.elev circle {
	fill: #fff;
}

.arrow {
	fill: none;
	stroke: #e01010;
	stroke-width: 2;
	shape-rendering: auto;
}

.note {
	font: 7px "DejaVu Sans", sans-serif;
	text-anchor: middle;
}

.small {
	font-size: 6px;
}
```
